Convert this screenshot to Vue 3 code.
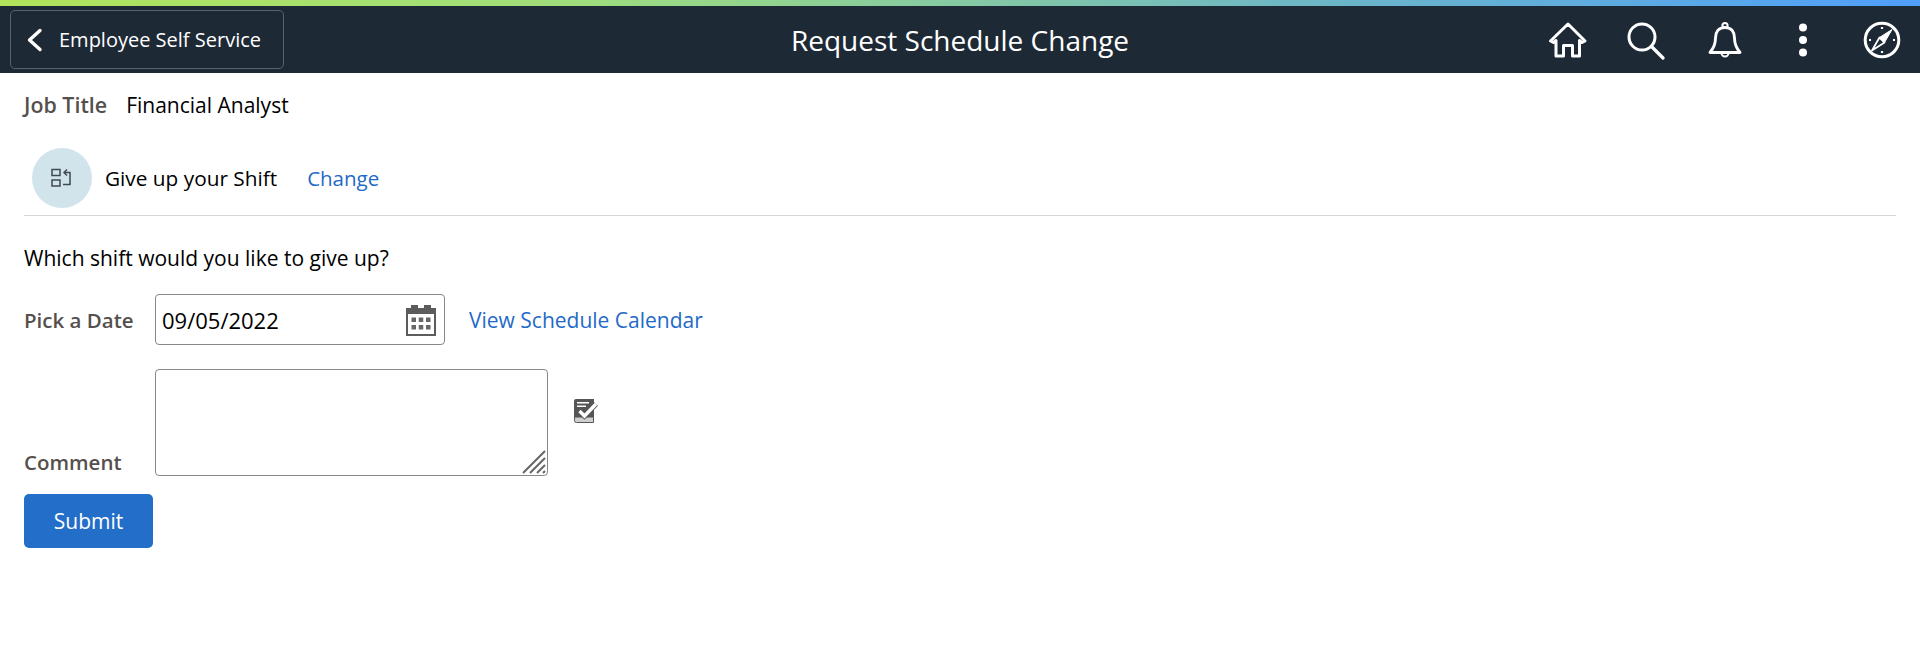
<template>
  <div class="page">
    <div class="accent" />
    <header class="banner">
      <div class="banner-left">
        <button class="back-btn" type="button">
          <svg class="back-icon" viewBox="0 0 16 24" width="16" height="24">
            <path d="M13 2.500 2.500 12 13 21.500" fill="none" stroke="#fff" stroke-width="3.400" stroke-linecap="round" stroke-linejoin="round" />
          </svg>
          <span>Employee Self Service</span>
        </button>
      </div>
      <h1 class="banner-title">Request Schedule Change</h1>
      <nav class="banner-actions">
        <span class="action">
          <svg viewBox="0 0 40 40" width="40" height="40" fill="none" stroke="#fff" stroke-width="3" stroke-linejoin="round" stroke-linecap="round">
            <path d="M2.500 21 20 4l17 17-3 1.500-2.500-2V36H24.500V25.500h-9V36H8V20.500L5.500 22.500Z" />
          </svg>
        </span>
        <span class="action">
          <svg viewBox="0 0 40 40" width="40" height="40" fill="none" stroke="#fff" stroke-linecap="round">
            <circle cx="16" cy="17" r="13" stroke-width="3" />
            <path d="m25.500 26.500 11.500 11.500" stroke-width="3.200" />
          </svg>
        </span>
        <span class="action">
          <svg viewBox="0 0 40 40" width="40" height="40" fill="none" stroke="#fff" stroke-width="2.900" stroke-linejoin="round">
            <circle cx="20" cy="5.500" r="2.600" stroke-width="2" />
            <path d="M20 7.500c-6.500 0-9.500 4.500-9.500 10.500 0 7-2.500 11-5.500 14.500h30c-3-3.500-5.500-7.500-5.500-14.500 0-6-3-10.500-9.500-10.500Z" />
            <path d="M16.500 33a3.500 3.500 0 0 0 7 0" stroke-width="2" />
          </svg>
        </span>
        <span class="action">
          <svg viewBox="0 0 40 40" width="40" height="40" fill="#fff">
            <circle cx="20" cy="7.500" r="4" />
            <circle cx="20" cy="20" r="4" />
            <circle cx="20" cy="32.500" r="4" />
          </svg>
        </span>
        <span class="action">
          <svg viewBox="0 0 40 40" width="40" height="40" fill="none" stroke="#fff">
            <circle cx="20" cy="20" r="16.800" stroke-width="3" />
            <path d="M30 9.500 22.500 22.500 17.500 17.500Z" fill="#fff" stroke-width="1" stroke-linejoin="round" />
            <path d="M10 30.500 17.500 17.500 22.500 22.500Z" stroke-width="1.800" stroke-linejoin="round" />
            <path d="M20 7v2M20 31v2M7 20h2M31 20h2" stroke-width="2.200" />
          </svg>
        </span>
      </nav>
    </header>

    <main class="content">
      <div class="job-row">
        <span class="label">Job Title</span>
        <span>Financial Analyst</span>
      </div>

      <div class="type-row">
        <span class="type-badge">
          <svg viewBox="0 0 22 20" width="22" height="20" fill="none" stroke="#3f4a52" stroke-width="1.500">
            <rect x="1" y="1.500" width="8" height="6" />
            <rect x="1" y="12" width="8" height="6" />
            <path d="M12 16.500h7V4.500h-5" />
            <path d="M16 1.500 13 4.500 16 7.500" />
          </svg>
        </span>
        <span class="type-name">Give up your Shift</span>
        <a class="link change-link" href="#">Change</a>
      </div>

      <p class="prompt">Which shift would you like to give up?</p>

      <div class="date-row">
        <label class="label field-label">Pick a Date</label>
        <div class="date-input">
          <span class="date-value">09/05/2022</span>
          <svg viewBox="0 0 32 32" width="32" height="32">
            <path fill="#5c5c5c" d="M1 4h5V1h7v3h6V1h7v3h5v28H1Z" />
            <rect x="3" y="10" width="26" height="20" fill="#fff" />
            <g fill="#666">
              <rect x="6.500" y="13.500" width="4.500" height="4.500" />
              <rect x="13.750" y="13.500" width="4.500" height="4.500" />
              <rect x="21" y="13.500" width="4.500" height="4.500" />
              <rect x="6.500" y="21" width="4.500" height="4.500" />
              <rect x="13.750" y="21" width="4.500" height="4.500" />
              <rect x="21" y="21" width="4.500" height="4.500" />
            </g>
          </svg>
        </div>
        <a class="link calendar-link" href="#">View Schedule Calendar</a>
      </div>

      <div class="comment-row">
        <label class="label field-label">Comment</label>
        <div class="comment-box">
          <svg class="grip" viewBox="0 0 24 24" width="24" height="24" fill="none" stroke="#666" stroke-width="2">
            <path d="M1 23 23 1M8 23 23 8M15 23l8-8M21 23l2-2" />
          </svg>
        </div>
        <span class="spell">
          <svg viewBox="0 0 26 26" width="26" height="26">
            <path fill="#555" d="M3 1h18v18H1V3a2 2 0 0 1 2-2Z" />
            <path fill="#cfcfcf" stroke="#555" d="M1.500 19h19v5.500H3.500a2 2 0 0 1-2-2Z" />
            <path fill="#fff" d="M4 4h12v1.600H4ZM4 7.500h9v1.600H4Z" />
            <path fill="none" stroke="#555" stroke-width="5.400" d="m6.500 13 5 5L23 6" />
            <path fill="none" stroke="#fff" stroke-width="3.400" d="m6.500 13 5 5L23 6" />
          </svg>
        </span>
      </div>

      <button class="submit" type="button">Submit</button>
    </main>
  </div>
</template>

<script setup>
</script>

<style>
html,
body {
  margin: 0;
  background: #fff;
}
</style>

<style scoped>
.page {
  min-height: 661px;
  font-family: "Open Sans", "Noto Sans", sans-serif;
  font-size: 21px;
  color: #000;
}

.accent {
  height: 6px;
  background: linear-gradient(90deg, #b1e45b 0%, #9fdd7c 30%, #6bb5c9 70%, #4f9ffb 100%);
}

.banner {
  display: grid;
  grid-template-columns: 1fr auto 1fr;
  align-items: center;
  height: 67px;
  background: #1e2936;
  color: #fff;
}

.banner-left {
  display: flex;
  padding-left: 10px;
}

.back-btn {
  display: flex;
  align-items: center;
  gap: 16px;
  box-sizing: border-box;
  width: 274px;
  height: 59px;
  padding: 0 0 0 16px;
  border: 1px solid #59626f;
  border-radius: 5px;
  background: transparent;
  color: #fff;
  font: inherit;
  font-size: 20px;
}

.banner-title {
  margin: 0;
  font-size: 28px;
  font-weight: 400;
}

.banner-actions {
  display: flex;
  justify-content: flex-end;
  margin-right: -1px;
}

.action {
  display: flex;
  justify-content: center;
  width: 78.5px;
}

.content {
  padding: 0 24px;
}

.job-row {
  display: flex;
  align-items: center;
  gap: 19px;
  height: 47px;
  margin-top: 8px;
}

.job-row .label {
  font-size: 21.400px;
}

.label {
  color: #55504d;
  font-weight: 600;
}

.type-row {
  display: flex;
  align-items: center;
  height: 60px;
  margin-top: 20px;
  padding: 0 0 0 8px;
}

.type-badge {
  display: flex;
  align-items: center;
  justify-content: center;
  width: 60px;
  height: 60px;
  margin-right: 13px;
  border-radius: 50%;
  background: #d1e4ec;
}

.type-name {
  font-size: 20.800px;
}

.change-link {
  margin-left: 30px;
  font-size: 20.500px;
}

.link {
  color: #1f6ac7;
  text-decoration: none;
}

.prompt {
  margin: 7px 0 0;
  padding-top: 30px;
  border-top: 1px solid #d5d5da;
  line-height: 25px;
}

.date-row {
  display: flex;
  align-items: center;
  margin-top: 23px;
}

.field-label {
  width: 131px;
  flex: none;
  font-size: 20.500px;
}

.date-input {
  display: flex;
  align-items: center;
  justify-content: space-between;
  box-sizing: border-box;
  width: 290px;
  height: 51px;
  padding: 0 7px 0 6px;
  border: 1px solid #85888c;
  border-radius: 4px;
}

.date-value {
  font-size: 22px;
}

.calendar-link {
  margin-left: 24px;
}

.comment-row {
  display: flex;
  align-items: flex-end;
  margin-top: 24px;
}

.comment-row .field-label {
  line-height: 25px;
  margin-bottom: 1px;
}

.comment-box {
  position: relative;
  box-sizing: border-box;
  width: 393px;
  height: 107px;
  border: 1px solid #85888c;
  border-radius: 4px;
}

.grip {
  position: absolute;
  right: 1px;
  bottom: 1px;
}

.spell {
  align-self: flex-start;
  margin: 29px 0 0 25px;
  line-height: 0;
}

.submit {
  display: block;
  width: 129px;
  height: 54px;
  margin-top: 18px;
  border: 0;
  border-radius: 5px;
  background: #226ec9;
  color: #fff;
  font: inherit;
}
</style>
